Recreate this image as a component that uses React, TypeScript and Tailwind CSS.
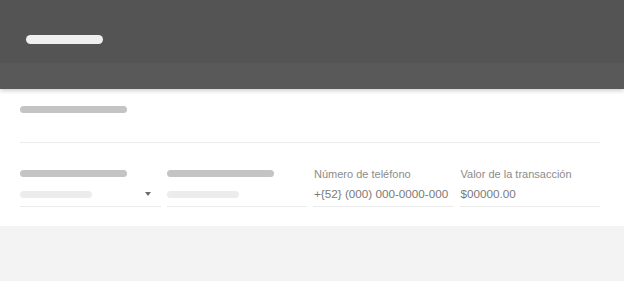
const FONT = "font-['Liberation_Sans','Roboto',sans-serif]";

function Pill({ className }: { className: string }) {
  return <div className={`rounded-full ${className}`} />;
}

function Caret() {
  return (
    <svg width="6" height="4" viewBox="0 0 6 4" className="shrink-0">
      <path d="M0 0 L6 0 L3 4 Z" fill="#6b6b6b" />
    </svg>
  );
}

type Field = {
  label?: string;
  value?: string;
  select?: boolean;
};

const FIELDS: Field[] = [
  { select: true },
  {},
  { label: "Número de teléfono", value: "+{52} (000) 000-0000-000" },
  { label: "Valor de la transacción", value: "$00000.00" },
];

export default function App() {
  return (
    <div className={`h-[281px] w-full bg-[#f3f3f3] ${FONT}`}>
      <header className="relative z-10 shadow-[0_2px_4px_rgba(0,0,0,0.18)]">
        <div className="flex h-[63px] items-start bg-[#545454] pl-[26px] pt-[35px]">
          <Pill className="h-[9px] w-[77px] bg-[#efefef]" />
        </div>
        <div className="h-[26px] bg-[#595959]" />
      </header>

      <section className="bg-white pl-[20px] pr-[24px] pt-[17px] pb-[19px]">
        <Pill className="h-[7px] w-[107px] bg-[#c4c4c4]" />
        <div className="mt-[29px] border-t border-[#ececec]" />

        <div className="mt-[22px] grid grid-cols-4 gap-x-[6px]">
          {FIELDS.map((f, i) => (
            <div key={i} className="flex flex-col">
              <div className="flex h-[17px] items-center">
                {f.label ? (
                  <span className="whitespace-nowrap pl-[1px] text-[11px] leading-[16px] text-[#8c8c8c]">
                    {f.label}
                  </span>
                ) : (
                  <Pill className="h-[7px] w-[107px] bg-[#c4c4c4]" />
                )}
              </div>
              <div className="flex h-[25px] items-center justify-between border-b border-[#ebebeb] pr-[10px]">
                {f.value ? (
                  <span className="whitespace-nowrap pl-[1px] text-[11.7px] leading-[16px] text-[#7a7a7a]">
                    {f.value}
                  </span>
                ) : (
                  <Pill className="h-[7px] w-[72px] bg-[#ececec]" />
                )}
                {f.select && <Caret />}
              </div>
            </div>
          ))}
        </div>
      </section>
    </div>
  );
}
